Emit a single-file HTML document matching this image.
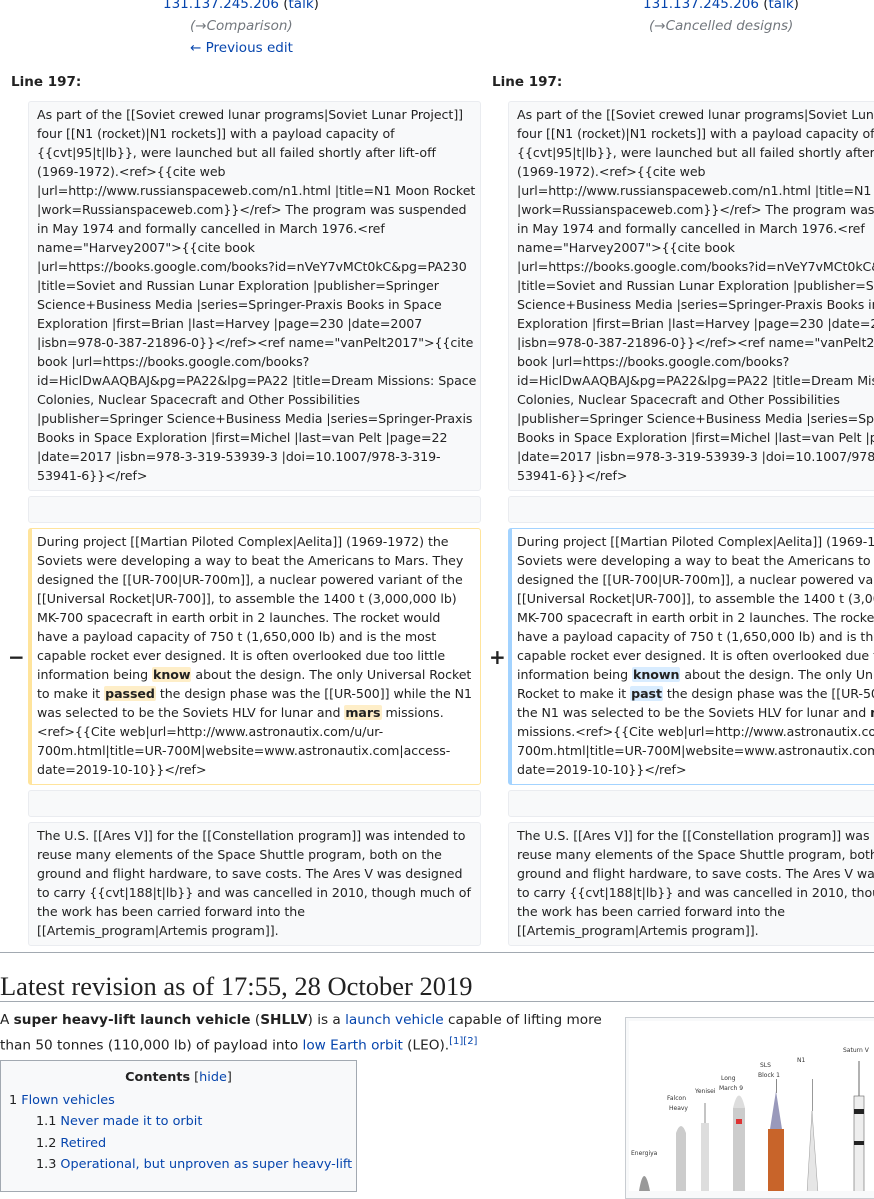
<!DOCTYPE html>
<html><head><meta charset="utf-8"><style>
body{margin:0;width:874px;height:1180px;overflow:hidden;background:#fff;font-family:"DejaVu Sans","Liberation Sans",sans-serif;color:#222;position:relative}
.a{position:absolute;white-space:nowrap}
a,.l{color:#0645ad;text-decoration:none}
.c{font-size:13.5px;text-align:center}
.g{color:#72777d;font-style:italic}
.box{position:absolute;width:435px;background:#f8f9fa;border:1px solid #eaecf0;border-radius:3px;padding:3px 8px 7px 8px;font-size:12.6px;line-height:19px;white-space:nowrap;overflow:hidden;letter-spacing:-0.05px}
.del{background:#fff;border:1px solid #ffe49c;border-left:4px solid #ffe49c;padding-left:5px}
.ins{background:#fff;border:1px solid #a3d3ff;border-left:4px solid #a3d3ff;padding-left:5px}
.dw{background:#feeec8;font-weight:bold;border-radius:2px;padding:0 1px}
.iw{background:#d8ecff;font-weight:bold;border-radius:2px;padding:0 1px}
.ln{font-size:13.5px;font-weight:bold}
</style></head><body>
<div class="a c" style="left:163px;top:-4px"><a>131.137.245.206</a> (<a>talk</a>)</div>
<div class="a c g" style="left:190px;top:18px">(→Comparison)</div>
<div class="a c" style="left:190px;top:40px"><a>← Previous edit</a></div>
<div class="a c" style="left:643px;top:-4px"><a>131.137.245.206</a> (<a>talk</a>)</div>
<div class="a c g" style="left:649px;top:18px">(→Cancelled designs)</div>
<div class="a ln" style="left:11px;top:74px">Line 197:</div>
<div class="a ln" style="left:492px;top:74px">Line 197:</div>

<div class="box" style="left:28px;top:101px;height:378px">As part of the [[Soviet crewed lunar programs|Soviet Lunar Project]]<br>four [[N1 (rocket)|N1 rockets]] with a payload capacity of<br>{{cvt|95|t|lb}}, were launched but all failed shortly after lift-off<br>(1969-1972).&lt;ref&gt;{{cite web<br>|url=http://www.russianspaceweb.com/n1.html |title=N1 Moon Rocket<br>|work=Russianspaceweb.com}}&lt;/ref&gt; The program was suspended<br>in May 1974 and formally cancelled in March 1976.&lt;ref<br>name="Harvey2007"&gt;{{cite book<br>|url=https://books.google.com/books?id=nVeY7vMCt0kC&amp;pg=PA230<br>|title=Soviet and Russian Lunar Exploration |publisher=Springer<br>Science+Business Media |series=Springer-Praxis Books in Space<br>Exploration |first=Brian |last=Harvey |page=230 |date=2007<br>|isbn=978-0-387-21896-0}}&lt;/ref&gt;&lt;ref name="vanPelt2017"&gt;{{cite<br>book |url=https://books.google.com/books?<br>id=HiclDwAAQBAJ&amp;pg=PA22&amp;lpg=PA22 |title=Dream Missions: Space<br>Colonies, Nuclear Spacecraft and Other Possibilities<br>|publisher=Springer Science+Business Media |series=Springer-Praxis<br>Books in Space Exploration |first=Michel |last=van Pelt |page=22<br>|date=2017 |isbn=978-3-319-53939-3 |doi=10.1007/978-3-319-<br>53941-6}}&lt;/ref&gt;</div>
<div class="box" style="left:508px;top:101px;height:378px">As part of the [[Soviet crewed lunar programs|Soviet Lunar Project]]<br>four [[N1 (rocket)|N1 rockets]] with a payload capacity of<br>{{cvt|95|t|lb}}, were launched but all failed shortly after lift-off<br>(1969-1972).&lt;ref&gt;{{cite web<br>|url=http://www.russianspaceweb.com/n1.html |title=N1 Moon Rocket<br>|work=Russianspaceweb.com}}&lt;/ref&gt; The program was suspended<br>in May 1974 and formally cancelled in March 1976.&lt;ref<br>name="Harvey2007"&gt;{{cite book<br>|url=https://books.google.com/books?id=nVeY7vMCt0kC&amp;pg=PA230<br>|title=Soviet and Russian Lunar Exploration |publisher=Springer<br>Science+Business Media |series=Springer-Praxis Books in Space<br>Exploration |first=Brian |last=Harvey |page=230 |date=2007<br>|isbn=978-0-387-21896-0}}&lt;/ref&gt;&lt;ref name="vanPelt2017"&gt;{{cite<br>book |url=https://books.google.com/books?<br>id=HiclDwAAQBAJ&amp;pg=PA22&amp;lpg=PA22 |title=Dream Missions: Space<br>Colonies, Nuclear Spacecraft and Other Possibilities<br>|publisher=Springer Science+Business Media |series=Springer-Praxis<br>Books in Space Exploration |first=Michel |last=van Pelt |page=22<br>|date=2017 |isbn=978-3-319-53939-3 |doi=10.1007/978-3-319-<br>53941-6}}&lt;/ref&gt;</div>

<div class="box" style="left:28px;top:496px;height:15px"></div>
<div class="box" style="left:508px;top:496px;height:15px"></div>

<div class="a" style="left:8px;top:645px;font-size:20px;font-weight:bold">−</div>
<div class="a" style="left:489px;top:645px;font-size:20px;font-weight:bold">+</div>
<div class="box del" style="left:28px;top:528px;height:245px">During project [[Martian Piloted Complex|Aelita]] (1969-1972) the<br>Soviets were developing a way to beat the Americans to Mars. They<br>designed the [[UR-700|UR-700m]], a nuclear powered variant of the<br>[[Universal Rocket|UR-700]], to assemble the 1400 t (3,000,000 lb)<br>MK-700 spacecraft in earth orbit in 2 launches. The rocket would<br>have a payload capacity of 750 t (1,650,000 lb) and is the most<br>capable rocket ever designed. It is often overlooked due too little<br>information being <span class="dw">know</span> about the design. The only Universal Rocket<br>to make it <span class="dw">passed</span> the design phase was the [[UR-500]] while the N1<br>was selected to be the Soviets HLV for lunar and <span class="dw">mars</span> missions.<br>&lt;ref&gt;{{Cite web|url=http://www.astronautix.com/u/ur-<br>700m.html|title=UR-700M|website=www.astronautix.com|access-<br>date=2019-10-10}}&lt;/ref&gt;</div>
<div class="box ins" style="left:508px;top:528px;height:245px">During project [[Martian Piloted Complex|Aelita]] (1969-1972) the<br>Soviets were developing a way to beat the Americans to Mars. They<br>designed the [[UR-700|UR-700m]], a nuclear powered variant of the<br>[[Universal Rocket|UR-700]], to assemble the 1400 t (3,000,000 lb)<br>MK-700 spacecraft in earth orbit in 2 launches. The rocket would<br>have a payload capacity of 750 t (1,650,000 lb) and is the most<br>capable rocket ever designed. It is often overlooked due too little<br>information being <span class="iw">known</span> about the design. The only Universal<br>Rocket to make it <span class="iw">past</span> the design phase was the [[UR-500]] while<br>the N1 was selected to be the Soviets HLV for lunar and <b>mars</b><br>missions.&lt;ref&gt;{{Cite web|url=http://www.astronautix.com/u/ur-<br>700m.html|title=UR-700M|website=www.astronautix.com|access-<br>date=2019-10-10}}&lt;/ref&gt;</div>

<div class="box" style="left:28px;top:790px;height:15px"></div>
<div class="box" style="left:508px;top:790px;height:15px"></div>

<div class="box" style="left:28px;top:822px;height:112px">The U.S. [[Ares V]] for the [[Constellation program]] was intended to<br>reuse many elements of the Space Shuttle program, both on the<br>ground and flight hardware, to save costs. The Ares V was designed<br>to carry {{cvt|188|t|lb}} and was cancelled in 2010, though much of<br>the work has been carried forward into the<br>[[Artemis_program|Artemis program]].</div>
<div class="box" style="left:508px;top:822px;height:112px">The U.S. [[Ares V]] for the [[Constellation program]] was intended to<br>reuse many elements of the Space Shuttle program, both on the<br>ground and flight hardware, to save costs. The Ares V was designed<br>to carry {{cvt|188|t|lb}} and was cancelled in 2010, though much of<br>the work has been carried forward into the<br>[[Artemis_program|Artemis program]].</div>

<div class="a" style="left:0;top:952px;width:874px;border-top:1px solid #a2a9b1"></div>
<div class="a" style="left:0;top:971px;font-family:'Liberation Serif',serif;font-size:26.5px">Latest revision as of 17:55, 28 October 2019</div>
<div class="a" style="left:0;top:1001px;width:874px;border-top:1px solid #a2a9b1"></div>
<div class="a" style="left:0;top:1009px;font-size:13.65px;line-height:22px">A <b>super heavy-lift launch vehicle</b> (<b>SHLLV</b>) is a <a>launch vehicle</a> capable of lifting more<br>than 50 tonnes (110,000 lb) of payload into <a>low Earth orbit</a> (LEO).<sup style="font-size:10px;color:#0645ad">[1][2]</sup></div>

<div class="a" style="left:0;top:1060px;width:355px;height:130px;background:#f8f9fa;border:1px solid #a2a9b1;font-size:12.8px;line-height:21.5px">
<div style="text-align:center;margin-top:6px"><b>Contents</b> [<a>hide</a>]</div>
<div style="padding-left:8px;margin-top:1px">1 <a>Flown vehicles</a></div>
<div style="padding-left:35px">1.1 <a>Never made it to orbit</a></div>
<div style="padding-left:35px">1.2 <a>Retired</a></div>
<div style="padding-left:35px">1.3 <a>Operational, but unproven as super heavy-lift</a></div>
</div>

<div class="a" style="left:625px;top:1017px;width:260px;height:180px;background:#f8f9fa;border:1px solid #c8ccd1">
<svg width="250" height="170" style="position:absolute;left:3px;top:3px;background:#fff" font-family="DejaVu Sans" font-size="6" fill="#333">
<text x="2" y="134">Energiya</text>
<path d="M10 170 Q15 140 21 170Z" fill="#999"/>
<text x="38" y="79">Falcon</text><text x="40" y="89">Heavy</text>
<rect x="47" y="112" width="10" height="60" fill="#ccc"/><path d="M47 112 Q52 98 57 112Z" fill="#ccc"/>
<text x="66" y="72">Yenisei</text>
<rect x="72" y="102" width="8" height="70" fill="#ddd"/><line x1="76" y1="82" x2="76" y2="102" stroke="#888"/>
<text x="92" y="59">Long</text><text x="90" y="69">March 9</text>
<rect x="104" y="87" width="12" height="85" fill="#ccc"/><path d="M104 87 Q110 62 116 87Z" fill="#ddd"/><rect x="107" y="98" width="6" height="5" fill="#d33"/>
<text x="131" y="46">SLS</text><text x="129" y="56">Block 1</text>
<rect x="139" y="108" width="16" height="64" fill="#c8642a"/><path d="M141 108 L147 70 L153 108Z" fill="#99b"/><line x1="147.5" y1="58" x2="147.5" y2="72" stroke="#888"/>
<text x="168" y="41">N1</text>
<path d="M178 172 L183 90 L189 172Z" fill="#e6e6e6" stroke="#999" stroke-width=".5"/><line x1="183.5" y1="58" x2="183.5" y2="90" stroke="#999"/>
<text x="214" y="31">Saturn V</text>
<rect x="225" y="75" width="10" height="97" fill="#eee" stroke="#666" stroke-width=".6"/><rect x="225" y="88" width="10" height="5" fill="#222"/><rect x="225" y="120" width="10" height="4" fill="#222"/><line x1="230" y1="40" x2="230" y2="75" stroke="#666"/>
</svg>
</div>
</body></html>
